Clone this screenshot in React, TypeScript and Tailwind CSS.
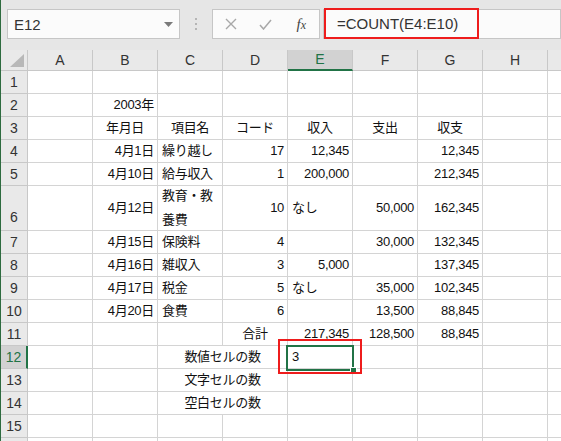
import React from 'react';

type Cell = { t: string; a?: 'l' | 'r' | 'c'; span?: number; wrap?: boolean };

const COLS = ['A', 'B', 'C', 'D', 'E', 'F', 'G', 'H', 'I'];

const data: Record<number, Record<string, Cell>> = {
  2: { B: { t: '2003年', a: 'r' } },
  3: {
    B: { t: '年月日', a: 'c' },
    C: { t: '項目名', a: 'c' },
    D: { t: 'コード', a: 'c' },
    E: { t: '収入', a: 'c' },
    F: { t: '支出', a: 'c' },
    G: { t: '収支', a: 'c' },
  },
  4: {
    B: { t: '4月1日', a: 'r' },
    C: { t: '繰り越し', a: 'l' },
    D: { t: '17', a: 'r' },
    E: { t: '12,345', a: 'r' },
    G: { t: '12,345', a: 'r' },
  },
  5: {
    B: { t: '4月10日', a: 'r' },
    C: { t: '給与収入', a: 'l' },
    D: { t: '1', a: 'r' },
    E: { t: '200,000', a: 'r' },
    G: { t: '212,345', a: 'r' },
  },
  6: {
    B: { t: '4月12日', a: 'r' },
    C: { t: '教育・教養費', a: 'l', wrap: true },
    D: { t: '10', a: 'r' },
    E: { t: 'なし', a: 'l' },
    F: { t: '50,000', a: 'r' },
    G: { t: '162,345', a: 'r' },
  },
  7: {
    B: { t: '4月15日', a: 'r' },
    C: { t: '保険料', a: 'l' },
    D: { t: '4', a: 'r' },
    F: { t: '30,000', a: 'r' },
    G: { t: '132,345', a: 'r' },
  },
  8: {
    B: { t: '4月16日', a: 'r' },
    C: { t: '雑収入', a: 'l' },
    D: { t: '3', a: 'r' },
    E: { t: '5,000', a: 'r' },
    G: { t: '137,345', a: 'r' },
  },
  9: {
    B: { t: '4月17日', a: 'r' },
    C: { t: '税金', a: 'l' },
    D: { t: '5', a: 'r' },
    E: { t: 'なし', a: 'l' },
    F: { t: '35,000', a: 'r' },
    G: { t: '102,345', a: 'r' },
  },
  10: {
    B: { t: '4月20日', a: 'r' },
    C: { t: '食費', a: 'l' },
    D: { t: '6', a: 'r' },
    F: { t: '13,500', a: 'r' },
    G: { t: '88,845', a: 'r' },
  },
  11: {
    D: { t: '合計', a: 'c' },
    E: { t: '217,345', a: 'r' },
    F: { t: '128,500', a: 'r' },
    G: { t: '88,845', a: 'r' },
  },
  12: { C: { t: '数値セルの数', a: 'c', span: 2 }, E: { t: '3', a: 'l' } },
  13: { C: { t: '文字セルの数', a: 'c', span: 2 } },
  14: { C: { t: '空白セルの数', a: 'c', span: 2 } },
};

const alignCls: Record<string, string> = {
  l: 'justify-start pl-[4px]',
  r: 'justify-end pr-[3px]',
  c: 'justify-center',
};

const FONT = { fontFamily: '"Liberation Sans", "Noto Sans CJK JP", sans-serif' };

function DataRow({ r }: { r: number }) {
  const row = data[r] || {};
  const out: React.ReactNode[] = [];
  const selected = r === 12;
  out.push(
    <div
      key="h"
      className={
        'flex justify-center border-b border-r ' +
        (r === 6 ? 'items-end pb-[2px] ' : 'items-center ') +
        (selected
          ? 'bg-[#d2d2d2] text-[#217346] border-b-[#c8c8c8] border-r-2 border-r-[#217346]'
          : 'bg-[#e9e9e9] text-[#333] border-[#c8c8c8]')
      }
    >
      {r <= 15 ? <span className="text-[14px]">{r}</span> : null}
    </div>
  );
  let i = 0;
  while (i < COLS.length) {
    const col = COLS[i];
    const c = row[col];
    const span = c?.span ?? 1;
    const isSel = r === 12 && col === 'E';
    out.push(
      <div
        key={col}
        className={
          'relative flex items-center border-b border-r border-[#d4d4d4] bg-white text-[13px] text-[#111] tracking-[-0.3px] ' +
          (c ? alignCls[c.a || 'l'] : '') +
          (span === 2 ? ' col-span-2' : '') +
          (c?.wrap ? ' whitespace-normal' : ' whitespace-nowrap')
        }
      >
        {c ? (
          c.wrap ? (
            <span className="block leading-[24px] break-all pr-[2px]">{c.t}</span>
          ) : (
            <span>{c.t}</span>
          )
        ) : null}
        {isSel && (
          <>
            <div className="absolute left-[-2px] top-[-1px] w-[68px] h-[26px] border-2 border-[#217346] z-10 pointer-events-none">
              <div className="absolute right-[-5px] bottom-[-5px] w-[7px] h-[7px] bg-[#217346] border border-white" />
            </div>
            <div className="absolute left-[-10px] top-[-7px] w-[84px] h-[35px] border-2 border-[#ee1c1c] z-20 pointer-events-none" />
          </>
        )}
      </div>
    );
    i += span;
  }
  return <>{out}</>;
}

export default function App() {
  const rows = Array.from({ length: 16 }, (_, k) => k + 1);
  return (
    <div className="w-[561px] h-[441px] overflow-hidden bg-[#e6e6e6] border-l border-[#2e6b3f]" style={FONT}>
      {/* Formula bar */}
      <div className="h-[50px] flex items-start pt-[9px] pl-[6px]">
        <div className="relative w-[173px] h-[30px] bg-[#fbfbfb] border border-[#c6c6c6] flex items-center pl-[6px] pt-[3px]">
          <span className="text-[15px] text-[#333]">E12</span>
          <svg className="absolute right-[6px] top-[12px]" width="9" height="5" viewBox="0 0 9 5">
            <polygon points="0,0 9,0 4.5,5" fill="#7a7a7a" />
          </svg>
        </div>
        <div className="w-[32px] h-[30px] flex flex-col items-center justify-center gap-[3px]">
          <div className="w-[2px] h-[2px] bg-[#b5b5b5]" />
          <div className="w-[2px] h-[2px] bg-[#b5b5b5]" />
          <div className="w-[2px] h-[2px] bg-[#b5b5b5]" />
        </div>
        <div className="w-[108px] h-[30px] bg-[#fbfbfb] border border-[#c6c6c6] flex items-center">
          <div className="w-[36px] flex justify-center">
            <svg width="12" height="12" viewBox="0 0 12 12">
              <path d="M1 1 L11 11 M11 1 L1 11" stroke="#a8a8a8" strokeWidth="1.4" fill="none" />
            </svg>
          </div>
          <div className="w-[36px] flex justify-center">
            <svg width="13" height="11" viewBox="0 0 13 11">
              <path d="M1 6 L4.5 10 L12 1" stroke="#a8a8a8" strokeWidth="1.5" fill="none" />
            </svg>
          </div>
          <div className="w-[36px] flex justify-center">
            <span
              className="text-[15px] italic text-[#444] leading-none"
              style={{ fontFamily: '"Liberation Serif", serif' }}
            >
              f<span className="text-[12px]">x</span>
            </span>
          </div>
        </div>
        <div className="relative ml-[3px] flex-1 h-[30px] bg-[#fbfbfb] border border-[#c6c6c6] flex items-center pl-[13px]">
          <span className="text-[15px] text-[#333] whitespace-nowrap">=COUNT(E4:E10)</span>
          <div className="absolute left-[0px] top-[-2px] w-[155px] h-[31px] border-2 border-[#ee1c1c]" />
        </div>
      </div>

      {/* Grid */}
      <div className="grid grid-cols-[27px_repeat(9,65px)] grid-rows-[21px_repeat(5,23px)_45px_repeat(10,23px)] w-[612px]">
        {/* header row */}
        <div className="relative bg-[#e9e9e9] border-b border-r border-[#c8c8c8]">
          <svg className="absolute right-[3px] bottom-[3px]" width="14" height="13" viewBox="0 0 14 13">
            <polygon points="14,0 14,13 0,13" fill="#b8b8b8" />
          </svg>
        </div>
        {COLS.map((c) => (
          <div
            key={c}
            className={
              'flex items-center justify-center text-[14px] border-r ' +
              (c === 'E'
                ? 'bg-[#d2d2d2] text-[#217346] border-r-[#c8c8c8] border-b-2 border-b-[#217346]'
                : 'bg-[#e9e9e9] text-[#333] border-b border-[#c8c8c8]')
            }
          >
            {c === 'I' ? null : c}
          </div>
        ))}
        {rows.map((r) => (
          <DataRow key={r} r={r} />
        ))}
      </div>
    </div>
  );
}
